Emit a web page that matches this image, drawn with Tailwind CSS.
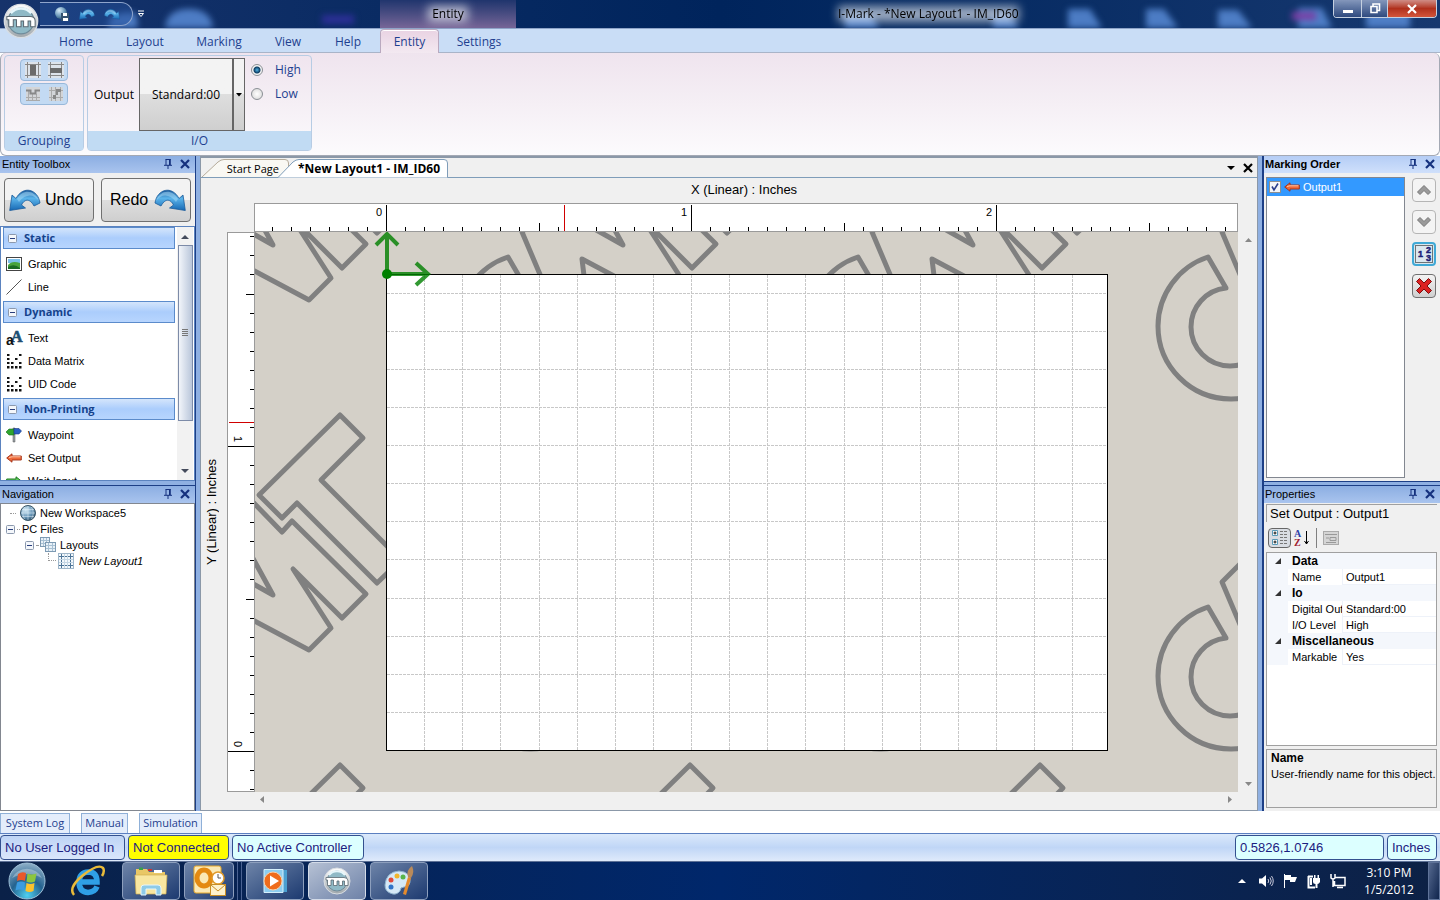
<!DOCTYPE html>
<html lang="en">

<head>
    <meta charset="UTF-8">
    <meta name="viewport" content="width=device-width, initial-scale=1.0">
    <script src="https://cdn.jsdelivr.net/npm/@tailwindcss/browser@4"></script>
    <title>I-Mark - *New Layout1 - IM_ID60</title>
</head>

<body class="h-screen flex flex-col overflow-hidden bg-white text-black text-[11px] leading-4 font-['Liberation_Sans',Arial,sans-serif]">

    <!-- shared icons -->
    <svg class="absolute w-0 h-0" aria-hidden="true">
        <defs>
            <linearGradient id="blueArrow" x1="0" y1="0" x2="0" y2="1">
                <stop offset="0" stop-color="#1c5a9c" />
                <stop offset=".4" stop-color="#5bb4ea" />
                <stop offset="1" stop-color="#1668b4" />
            </linearGradient>
            <linearGradient id="steel" x1="0" y1="0" x2="0" y2="1">
                <stop offset="0" stop-color="#ffffff" />
                <stop offset="1" stop-color="#9fa6ab" />
            </linearGradient>
            <radialGradient id="globe" cx=".35" cy=".3" r=".8">
                <stop offset="0" stop-color="#d6ecf8" />
                <stop offset=".6" stop-color="#6593b5" />
                <stop offset="1" stop-color="#24475f" />
            </radialGradient>
            <radialGradient id="orb" cx=".5" cy=".9" r=".9">
                <stop offset="0" stop-color="#4fd0f0" />
                <stop offset=".5" stop-color="#24628f" />
                <stop offset="1" stop-color="#8fb0c8" />
            </radialGradient>
        </defs>
        <symbol id="undo" viewBox="0 0 32 24">
            <path d="M3 7 L.7 22.500 L16.500 20 L12.500 17 C15 12 20 9 25 18 L31 15 C29 1 14 -3 7 10.500 Z" fill="url(#blueArrow)" stroke="#1b5c9a" stroke-width=".8" />
            <path d="M8 11 C14 0 26 2 30 13 C25 6 17 5 10 14 Z" fill="#a9dcf7" opacity=".5" />
        </symbol>
        <symbol id="pin" viewBox="0 0 10 10">
            <path d="M2.500 .5 H7.500 M3 .5 V6 M6.500 0 V6 M7.300 0 V6 M1 6.300 H9 M5 6 V10" stroke="#15317e" fill="none" />
        </symbol>
        <symbol id="cross" viewBox="0 0 10 10">
            <path d="M1 1 L9 9 M9 1 L1 9" stroke="currentColor" stroke-width="2.200" fill="none" />
        </symbol>
        <symbol id="minus" viewBox="0 0 9 9">
            <rect x=".5" y=".5" width="8" height="8" rx="1" fill="#f4f7fb" stroke="#8b98ad" />
            <path d="M2 4.500 H7" stroke="#2a3f7d" />
        </symbol>
        <symbol id="redarrow" viewBox="0 0 16 10">
            <path d="M.7 5 L6 .8 V3 H15.300 V7 H6 V9.200 Z" fill="#ee6a3b" stroke="#a02c12" stroke-width=".9" />
            <path d="M3 4.500 L6 3.800 H14.500" stroke="#ffc9a8" fill="none" />
        </symbol>
        <symbol id="matrix" viewBox="0 0 16 16">
            <path d="M1 1h2.500v2h-2.500z M1 5h2.500v2h-2.500z M1 9h2.500v2h-2.500z M1 13h2.500v2.500h-2.500z M5 13h2.500v2.500h-2.500z M9 13h2.500v2.500h-2.500z M13 13h2.500v2.500h-2.500z M13 1h2.500v2h-2.500z M9 5h2.500v2h-2.500z M13 9h2.500v2h-2.500z M5 9h2.500v2h-2.500z" fill="#111" />
        </symbol>
        <symbol id="im" viewBox="0 0 28 28">
            <circle cx="14" cy="14" r="13" fill="url(#steel)" stroke="#d8dde2" />
            <circle cx="14" cy="14" r="10" fill="#8fb9c6" stroke="#6f8c9b" />
            <path d="M6 8 A10.500 10.500 0 0 1 22 8" stroke="#e6f6fb" stroke-width="2" fill="none" />
            <path d="M3 10.500 H21 Q25 10.500 25 14 V18.500 H21.500 V14 H19.500 V18.500 H16 V14 H14 V18.500 H10.500 V13 H8 V18.500 H4.500 V13 H3 Z" fill="#fff" stroke="#5b6871" stroke-width=".8" />
        </symbol>
        <symbol id="layout" viewBox="0 0 16 16">
            <rect x=".5" y=".5" width="15" height="15" fill="#f3f8fc" stroke="#9fb6c9" />
            <path d="M3.500 1 V15 M12.500 1 V15 M1 3.500 H15 M1 12.500 H15" stroke="#4d7497" />
            <path d="M6.500 1 V15 M9.500 1 V15 M1 6.500 H15 M1 9.500 H15" stroke="#c4d6e4" />
        </symbol>
    </svg>

    <!-- title bar -->
    <header class="relative h-7 shrink-0 flex items-center overflow-hidden bg-gradient-to-r from-[#16336b] via-[#00245c] to-[#16386f] font-['Open_Sans',sans-serif]">
        <svg class="absolute inset-0 w-full h-full" aria-hidden="true">
            <g class="blur-[3px]" fill="#5d90dc">
                <path d="M165 28 q2 -20 26 -19 q20 1 22 19z M108 28 q0 -18 28 -15 l2 15z" opacity=".8" />
                <path d="M845 14h26l8 14h-34z M993 14h16l10 14h-26z M1068 9h22l12 19h-34z M1146 9h18l14 19h-32z M1218 10h20l14 18h-34z M1298 8h24l10 20h-34z M1366 8h44v20h-44z" opacity=".8" />
                <path d="M1292 12h24v8h-24z" fill="#7a3fa5" />
                <path d="M322 15h32v9h-32z" fill="#2c2f96" />
            </g>
        </svg>
        <div class="relative ml-10 flex items-center gap-[9px] h-6 pl-[14px] pr-3 rounded-r-full border border-[#8fa5cc] border-l-0 bg-[#23509a]/50">
            <button aria-label="Save"><svg class="size-4" viewBox="0 0 16 16"><circle cx="7" cy="7" r="6" fill="url(#globe)" /><rect x="7" y="7" width="8" height="8" fill="#35526f" /><path d="M9 7h4v3H9z M9 12h5v3H9z" fill="#fff" /></svg></button>
            <button aria-label="Undo"><svg class="w-4 h-3"><use href="#undo" /></svg></button>
            <button aria-label="Redo"><svg class="w-4 h-3 -scale-x-100"><use href="#undo" /></svg></button>
        </div>
        <button aria-label="Customize" class="relative ml-1"><svg class="w-2 h-2" viewBox="0 0 8 8"><path d="M1 1H7 M1.500 3.500H6.500L4 6.500Z" stroke="#fff" fill="none" /></svg></button>
        <div class="absolute left-[380px] w-[136px] h-7 flex items-center justify-center text-xs bg-gradient-to-b from-[#2b3a72]/70 to-[#a77fae]/70"><span class="bg-white/60 blur-[5px] absolute w-10 h-4"></span><span class="relative">Entity</span></div>
        <div class="absolute left-[838px] text-xs"><span class="absolute inset-0 bg-white/60 blur-[5px]"></span><span class="relative whitespace-nowrap">I-Mark - *New Layout1 - IM_ID60</span></div>
        <div class="relative ml-auto mr-[3px] self-start flex h-[18px] rounded-b-sm overflow-hidden border border-t-0 border-[#c5d0e0]">
            <button aria-label="Minimize" class="w-7 bg-gradient-to-b from-[#8497bb] to-[#2f4a7f] border-r border-[#c5d0e0]"><svg class="mx-auto w-3 h-4" viewBox="0 0 12 16"><rect x="1" y="9" width="10" height="3" fill="#fff" /></svg></button>
            <button aria-label="Restore" class="w-[26px] bg-gradient-to-b from-[#8497bb] to-[#2f4a7f] border-r border-[#c5d0e0]"><svg class="mx-auto w-3 h-4" viewBox="0 0 12 16"><path d="M4 5V3H10.500V9.500H8.500 M2 5.500H8V11.500H2Z" stroke="#fff" stroke-width="1.600" fill="none" /></svg></button>
            <button aria-label="Close" class="w-12 text-white bg-gradient-to-b from-[#cf8c85] via-[#b0301c] to-[#d3553a]"><svg class="mx-auto size-[10px]"><use href="#cross" /></svg></button>
        </div>
    </header>
    <button aria-label="Application menu" class="absolute left-[3px] top-[3px] z-10 size-9"><svg class="size-9"><use href="#im" /></svg></button>

    <!-- ribbon tabs -->
    <nav class="h-[25px] shrink-0 flex items-end pl-11 bg-[#c9ddf6] text-xs text-[#1e3f8f] border-t border-[#8ea4c8] font-['Open_Sans',sans-serif] shadow-[inset_0_-1px_#a9b4c8]">
        <a href="#" class="w-16 h-6 pt-px flex items-center justify-center">Home</a>
        <a href="#" class="w-[74px] h-6 pt-px flex items-center justify-center">Layout</a>
        <a href="#" class="w-[74px] h-6 pt-px flex items-center justify-center">Marking</a>
        <a href="#" class="w-16 h-6 pt-px flex items-center justify-center">View</a>
        <a href="#" class="w-[60px] h-6 pt-px pr-1 flex items-center justify-center">Help</a>
        <a href="#" class="w-[59px] h-6 flex items-center justify-center rounded-t border border-b-0 border-[#b9a9bf] bg-gradient-to-b from-[#e9d3e3] to-[#f3e9f1] shadow-[inset_0_1px_#fff]">Entity</a>
        <a href="#" class="w-20 h-6 pt-px flex items-center justify-center">Settings</a>
    </nav>

    <!-- ribbon -->
    <section class="h-[103px] shrink-0 flex gap-[3px] pl-[3px] pt-[2px] pb-1 rounded-md border border-t-0 border-[#a4a9b4] bg-gradient-to-b from-[#efe4ee] via-[#f5eff5] to-[#fcfbfd] text-xs text-[#1e3f8f] font-['Open_Sans',sans-serif]">
        <div class="w-20 flex flex-col rounded border border-[#b7cce4]">
            <div class="flex-1 pt-[3px] flex flex-col items-center gap-[2px]">
                <div class="w-12 h-[22px] flex items-center justify-around rounded-sm border border-[#98b8da] bg-[#c3daf3]">
                    <button aria-label="Same width"><svg class="size-4" viewBox="0 0 16 16"><rect width="16" height="16" fill="#dde3ea" /><path d="M2.500 0V16M13.500 0V16M0 2.500H16M0 13.500H16" stroke="#888" /><rect x="5" y="3" width="6" height="10" fill="#6b6b6b" /></svg></button>
                    <button aria-label="Same height"><svg class="size-4" viewBox="0 0 16 16"><rect width="16" height="16" fill="#dde3ea" /><path d="M2.500 0V16M13.500 0V16M0 2.500H16M0 13.500H16" stroke="#888" /><rect x="2" y="6" width="12" height="5" fill="#6b6b6b" /></svg></button>
                </div>
                <div class="w-12 h-[22px] flex items-center justify-around rounded-sm border border-[#98b8da] bg-[#c3daf3]">
                    <button aria-label="Group"><svg class="size-4" viewBox="0 0 16 16"><rect x="1" y="1" width="14" height="14" fill="#d3d5d8" /><path d="M3.500 5V15M7.500 8V15M11.500 8V15M1 11.500H15M1 14.500H15" stroke="#aaa" fill="none" /><path d="M1 4.500H5.500V7.500H10.500V4.500H15" stroke="#888" stroke-width="2" fill="none" /></svg></button>
                    <button aria-label="Ungroup"><svg class="size-4" viewBox="0 0 16 16"><rect x="1" y="1" width="14" height="14" fill="#d3d5d8" /><path d="M3.500 1V15M7.500 1V15M12.500 1V15M1 4.500H15M1 11.500H15" stroke="#aaa" fill="none" /><path d="M8 3h5v3h-3v3h-2z M5 9h3v4h-3z" fill="#888" /></svg></button>
                </div>
            </div>
            <div class="h-[19px] text-center leading-[19px] bg-[#c1dbf3]">Grouping</div>
        </div>
        <div class="w-[225px] flex flex-col rounded border border-[#b7cce4]">
            <div class="flex-1 flex items-center pl-[6px] pt-[2px]">
                <label for="output" class="w-[45px] text-black">Output</label>
                <button id="output" class="w-[94px] h-[73px] border border-[#666] text-black bg-gradient-to-b from-[#f3f3f3] from-50% via-[#dedede] via-50% to-[#cfcfcf]">Standard:00</button>
                <button aria-label="Choose output" class="-ml-px w-[13px] h-[73px] border border-l-2 border-[#666] bg-gradient-to-b from-[#f3f3f3] from-50% via-[#dedede] via-50% to-[#cfcfcf]"><svg class="mx-auto w-[6px] h-[4px]" viewBox="0 0 6 4"><path d="M0 0H6L3 3.500Z" /></svg></button>
                <div class="self-start ml-[6px] flex flex-col">
                    <label class="h-6 flex items-center gap-3"><input type="radio" name="level" checked class="appearance-none size-3 rounded-full border border-[#8a8f95] bg-[radial-gradient(#4fb3e6_0,#0d3c62_3px,#f4f4f4_4px)]">High</label>
                    <label class="h-6 flex items-center gap-3"><input type="radio" name="level" class="appearance-none size-3 rounded-full border border-[#8a8f95] bg-[radial-gradient(#fff,#d5d5d5)]">Low</label>
                </div>
            </div>
            <div class="h-[19px] text-center leading-[19px] bg-[#c1dbf3]">I/O</div>
        </div>
    </section>

    <!-- workspace -->
    <main class="flex-1 min-h-0 flex bg-[#8fb0e2]">

        <aside class="w-[196px] shrink-0 flex flex-col border-r border-[#1d3f86]">
            <div class="h-[17px] flex items-center pl-[2px] pr-[5px] pb-[2px] gap-[7px] bg-gradient-to-b from-[#8caee2] to-[#a9c4ee]">
                <h2 class="flex-1">Entity Toolbox</h2>
                <button aria-label="Auto hide"><svg class="size-[10px]"><use href="#pin" /></svg></button>
                <button aria-label="Close" class="text-[#15317e]"><svg class="size-[10px]"><use href="#cross" /></svg></button>
            </div>
            <div class="h-[53px] flex justify-between px-1 pt-[5px] bg-[#f0f0f0] text-base">
                <button class="w-[90px] h-11 flex items-center gap-1 pl-1 rounded-sm border border-[#707070] bg-gradient-to-b from-[#f3f3f3] from-50% via-[#dedede] via-50% to-[#cfcfcf]"><svg class="w-8 h-6"><use href="#undo" /></svg>Undo</button>
                <button class="w-[90px] h-11 flex items-center gap-[6px] pl-2 rounded-sm border border-[#707070] bg-gradient-to-b from-[#f3f3f3] from-50% via-[#dedede] via-50% to-[#cfcfcf]">Redo<svg class="w-8 h-6 -scale-x-100"><use href="#undo" /></svg></button>
            </div>
            <div class="h-[255px] flex border border-[#5b83bf] bg-white overflow-hidden">
                <div class="flex-1 px-[2px]">
                    <h3 class="h-[22px] mb-[3px] flex items-center gap-[7px] pl-1 border border-[#5b8bcb] bg-gradient-to-b from-[#d4e5fb] via-[#abcdfc] to-[#b7d5fe] font-bold text-[#15428b] font-['Open_Sans',sans-serif]"><svg class="size-[9px]"><use href="#minus" /></svg>Static</h3>
                    <ul>
                        <li class="h-[23px] flex items-center gap-[6px] pl-[3px]"><svg class="size-4" viewBox="0 0 16 16"><rect x=".5" y="1.500" width="15" height="13" fill="#fff" stroke="#444" /><rect x="2" y="3" width="12" height="4" fill="#7cc0ea" /><path d="M2 9Q6 4 14 7V13H2Z" fill="#48a33c" /><path d="M2 11Q8 7 14 12V13H2Z" fill="#1b6a25" /></svg>Graphic</li>
                        <li class="h-[23px] flex items-center gap-[6px] pl-[3px]"><svg class="size-4" viewBox="0 0 16 16"><path d="M.5 15.500L15.500 .5" stroke="#555" /></svg>Line</li>
                    </ul>
                    <h3 class="h-[22px] my-[3px] flex items-center gap-[7px] pl-1 border border-[#5b8bcb] bg-gradient-to-b from-[#d4e5fb] via-[#abcdfc] to-[#b7d5fe] font-bold text-[#15428b] font-['Open_Sans',sans-serif]"><svg class="size-[9px]"><use href="#minus" /></svg>Dynamic</h3>
                    <ul>
                        <li class="h-[23px] flex items-center gap-[6px] pl-[3px]"><svg class="size-4 overflow-visible" viewBox="0 0 16 16"><g font-weight="bold"><text x="5" y="12" font-family="Liberation Serif" font-size="16" fill="#1f4f72" stroke="#1f4f72" stroke-width=".6">A</text><text x="0" y="15" font-family="Liberation Sans" font-size="14" fill="#111">a</text></g></svg>Text</li>
                        <li class="h-[23px] flex items-center gap-[6px] pl-[3px]"><svg class="size-4"><use href="#matrix" /></svg>Data Matrix</li>
                        <li class="h-[23px] flex items-center gap-[6px] pl-[3px]"><svg class="size-4"><use href="#matrix" /></svg>UID Code</li>
                    </ul>
                    <h3 class="h-[22px] my-[3px] flex items-center gap-[7px] pl-1 border border-[#5b8bcb] bg-gradient-to-b from-[#d4e5fb] via-[#abcdfc] to-[#b7d5fe] font-bold text-[#15428b] font-['Open_Sans',sans-serif]"><svg class="size-[9px]"><use href="#minus" /></svg>Non-Printing</h3>
                    <ul>
                        <li class="h-[23px] flex items-center gap-[6px] pl-[3px]"><svg class="size-4" viewBox="0 0 16 16"><path d="M7 1H9V15H7Z" fill="#9aa3a8" stroke="#555" stroke-width=".5" /><path d="M0 5L3 2H8V8H3Z" fill="#2fa52f" stroke="#176b17" stroke-width=".6" /><path d="M15.500 4L13 1.500H8V7H13Z" fill="#2a5fc4" stroke="#173a80" stroke-width=".6" /></svg>Waypoint</li>
                        <li class="h-[23px] flex items-center gap-[6px] pl-[3px]"><svg class="w-4 h-[10px]"><use href="#redarrow" /></svg>Set Output</li>
                        <li class="h-[23px] flex items-center gap-[6px] pl-[3px]"><svg class="w-4 h-[10px]" viewBox="0 0 16 10"><path d="M15.300 5L10 .8V3H.7V7H10V9.200Z" fill="#5fc95a" stroke="#1e7a22" /></svg>Wait Input</li>
                    </ul>
                </div>
                <div class="w-4 mr-px flex flex-col items-center bg-[#f2f2f2]">
                    <svg class="h-[18px] w-2" viewBox="0 0 8 18"><path d="M0 12L4 8L8 12Z" fill="#444b5c" /></svg>
                    <div class="w-[15px] h-[176px] flex items-center justify-center border border-[#7d8ba8] bg-gradient-to-r from-[#f2f5fa] to-[#b9c6da]"><svg class="size-2" viewBox="0 0 8 8"><path d="M1 .5H7M1 2.500H7M1 4.500H7M1 6.500H7" stroke="#777" /></svg></div>
                    <svg class="mt-auto h-[18px] w-2" viewBox="0 0 8 18"><path d="M0 7L4 11L8 7Z" fill="#444b5c" /></svg>
                </div>
            </div>
            <div class="h-[5px] border-b border-[#1d3f86]"></div>
            <div class="h-[17px] flex items-center pl-[2px] pr-[5px] pb-[2px] gap-[7px] bg-gradient-to-b from-[#8caee2] to-[#a9c4ee]">
                <h2 class="flex-1">Navigation</h2>
                <button aria-label="Auto hide"><svg class="size-[10px]"><use href="#pin" /></svg></button>
                <button aria-label="Close" class="text-[#15317e]"><svg class="size-[10px]"><use href="#cross" /></svg></button>
            </div>
            <div class="flex-1 pt-px bg-white border border-[#828790]">
                <ul>
                    <li class="h-4 flex items-center gap-1 pl-[9px]"><span class="w-[6px] border-t border-dotted border-[#999]"></span><svg class="size-4" viewBox="0 0 16 16"><circle cx="8" cy="8" r="7.500" fill="url(#globe)" stroke="#3a5668" /><path d="M8 1V15M1 8H15M4.500 2Q1 8 4.500 14M11.500 2Q15 8 11.500 14M2 4.500H14M2 11.500H14" stroke="#e3f1fa" stroke-width=".5" fill="none" /></svg>New Workspace5</li>
                    <li class="h-4 flex items-center gap-[2px] pl-[5px]"><svg class="size-[9px]"><use href="#minus" /></svg><span class="w-[3px] border-t border-dotted border-[#999]"></span>PC Files</li>
                    <li class="h-4 flex items-center gap-[2px] pl-6"><svg class="size-[9px]"><use href="#minus" /></svg><span class="w-[2px] border-t border-dotted border-[#999]"></span><svg class="size-4 mr-[2px]" viewBox="0 0 16 16"><rect x=".5" y=".5" width="9" height="9" fill="#e8f1f8" stroke="#7d9ab3" /><path d="M3.500 1V9M6.500 1V9M1 3.500H9M1 6.500H9" stroke="#a9c1d4" /><rect x="5.500" y="5.500" width="10" height="9" fill="#e8f1f8" stroke="#7d9ab3" /><path d="M8.500 6V14M12.500 6V14M6 8.500H15M6 11.500H15" stroke="#a9c1d4" /></svg>Layouts</li>
                    <li class="h-4 flex items-center gap-[2px] pl-[47px]"><span class="w-2 h-2 -mt-2 border-l border-b border-dotted border-[#999]"></span><svg class="size-4 mr-[3px]"><use href="#layout" /></svg><i>New Layout1</i></li>
                </ul>
            </div>
        </aside>

        <section class="flex-1 min-w-0 ml-1 mr-[1px] flex flex-col bg-[#f0f0f0] border border-t-2 border-[#8b98a8]">
            <div class="h-5 flex items-end border-b border-[#7f9db9] font-['Open_Sans',sans-serif]">
                <div class="relative h-[18px] w-[88px]">
                    <svg class="absolute inset-0 w-full h-full" viewBox="0 0 88 18" preserveAspectRatio="none"><path d="M1 18L17 3Q20 .5 23 .5H84Q87.500 .5 87.500 4V18" fill="#f9f8f3" stroke="#b5ab9a" /></svg>
                    <a href="#" class="absolute right-[10px] top-[2px] whitespace-nowrap">Start Page</a>
                </div>
                <div class="relative -ml-[11px] -mb-px h-[19px] w-[170px]">
                    <svg class="absolute inset-0 w-full h-full" viewBox="0 0 170 19" preserveAspectRatio="none"><path d="M0 18.500L15 3Q18 .5 21 .5H166Q169.500 .5 169.500 4V18.500" fill="#fff" stroke="#7f9db9" /></svg>
                    <a href="#" class="absolute right-2 top-[2px] whitespace-nowrap font-bold text-xs">*New Layout1 - IM_ID60</a>
                </div>
                <div class="ml-auto mr-1 mb-1 flex items-center gap-2">
                    <button aria-label="Windows"><svg class="w-2 h-1" viewBox="0 0 8 4"><path d="M0 0H8L4 4Z" /></svg></button>
                    <button aria-label="Close document"><svg class="size-[10px]"><use href="#cross" /></svg></button>
                </div>
            </div>
            <div class="h-[25px] pl-[30px] text-center text-[13px] leading-[23px]">X (Linear) : Inches</div>
            <div class="flex-1 min-h-0 grid grid-cols-[26px_27px_1fr_19px] grid-rows-[29px_1fr_18px]">
                <div class="col-span-2"></div>
                <svg id="rulerX" class="w-full h-full bg-white border border-[#9a9a9a] text-[11px]"></svg>
                <div></div>

                <div class="flex justify-center items-center pr-1"><span class="[writing-mode:vertical-rl] rotate-180 whitespace-nowrap text-[13px]">Y (Linear) : Inches</span></div>
                <svg id="rulerY" class="w-full h-full bg-white border border-r-0 border-[#9a9a9a] text-[11px]"></svg>
                <svg id="canvas" class="w-full h-full bg-[#d4d0c8] border-l border-[#9a9a9a]">
                    <defs>
                        <pattern id="logo" width="350" height="350" patternUnits="userSpaceOnUse" patternTransform="translate(-175 178)">
                            <g transform="translate(-80 -410)" fill="none" stroke="#808080" stroke-width="5" stroke-linejoin="round">
                                <path d="M340 415L363 438L321 480L401 560L377 583L297 503L282 518L259 495Z" />
                                <path d="M248 497L282 532L292 521L366 594L342 618L293 569L331 628L309 650L232 609L240 676L222 700L172 582L200 554L273 595L232 520Z" />
                                <path d="M158 607A73 73 0 0 0 108 676A73 73 0 0 0 181 749A73 73 0 0 0 251 697L217 690A39 39 0 0 1 180 716A39 39 0 0 1 141 677A39 39 0 0 1 176 638Z" />
                            </g>
                        </pattern>
                    </defs>
                    <rect width="100%" height="100%" fill="url(#logo)" />
                    <rect x="131.500" y="42.500" width="721" height="476" fill="#fff" stroke="#000" />
                    <g id="grid" stroke="#c8c8c8" stroke-dasharray="3 1"></g>
                    <g stroke="#008000" stroke-width="4" fill="none" opacity=".8">
                        <path d="M132 42V3M121 13L132 2L143 13" />
                        <path d="M132 42H172M161 31L173 42L161 53" />
                    </g>
                    <circle cx="132" cy="42" r="5" fill="#008000" />
                </svg>
                <div class="ml-[2px] flex flex-col items-center justify-between py-[6px]">
                    <svg class="w-[7px] h-1" viewBox="0 0 7 4"><path d="M0 4L3.500 0L7 4Z" fill="#888" /></svg>
                    <svg class="w-[7px] h-1" viewBox="0 0 7 4"><path d="M0 0L3.500 4L7 0Z" fill="#888" /></svg>
                </div>

                <div class="col-span-2"></div>
                <div class="flex items-center justify-between px-[6px] pb-1">
                    <svg class="w-1 h-[7px]" viewBox="0 0 4 7"><path d="M4 0L0 3.500L4 7Z" fill="#888" /></svg>
                    <svg class="w-1 h-[7px]" viewBox="0 0 4 7"><path d="M0 0L4 3.500L0 7Z" fill="#888" /></svg>
                </div>
                <div></div>
            </div>
        </section>

        <aside class="w-[178px] shrink-0 ml-[3px] flex flex-col border-l-2 border-[#1d3f86]">
            <div class="h-[17px] flex items-center pl-[1px] pr-[5px] pb-[2px] gap-[7px] bg-gradient-to-b from-[#b5cdf5] to-[#cfe0fb]">
                <h2 class="flex-1 font-bold">Marking Order</h2>
                <button aria-label="Auto hide"><svg class="size-[10px]"><use href="#pin" /></svg></button>
                <button aria-label="Close" class="text-[#15317e]"><svg class="size-[10px]"><use href="#cross" /></svg></button>
            </div>
            <div class="h-[308px] flex gap-[7px] pl-[2px] pr-1 pt-1 pb-[3px] bg-[#f0f0f0]">
                <div class="flex-1 bg-white border border-[#828790]">
                    <label class="h-[18px] flex items-center gap-[3px] pl-[2px] bg-[#3399ff] text-white">
                        <input type="checkbox" checked class="peer sr-only">
                        <svg class="size-3" viewBox="0 0 12 12"><rect x=".5" y=".5" width="11" height="11" fill="#f3f5f8" stroke="#8e8f8f" /><path d="M3 5.500L5 9L9 2.500" stroke="#2b3f8c" stroke-width="1.600" fill="none" /></svg>
                        <svg class="w-4 h-[10px]"><use href="#redarrow" /></svg>Output1
                    </label>
                </div>
                <div class="w-6 flex flex-col gap-2 pt-px">
                    <button aria-label="Move up" class="size-6 flex items-center justify-center rounded-sm border border-[#b5b5b5] bg-[#f4f4f4]"><svg class="w-4 h-3" viewBox="0 0 16 12"><path d="M1.500 8L8 1.500L14.500 8L12 10.500L8 6.500L4 10.500Z" fill="#9a9a9a" stroke="#777" /></svg></button>
                    <button aria-label="Move down" class="size-6 flex items-center justify-center rounded-sm border border-[#b5b5b5] bg-[#f4f4f4]"><svg class="w-4 h-3" viewBox="0 0 16 12"><path d="M1.500 4L8 10.500L14.500 4L12 1.500L8 5.500L4 1.500Z" fill="#9a9a9a" stroke="#777" /></svg></button>
                    <button aria-label="Renumber" class="size-6 flex items-center justify-center rounded-sm border-2 border-[#3fa9d6] bg-[#dbe7ee]"><svg class="size-5" viewBox="0 0 20 20"><rect x="1.500" y="1.500" width="17" height="17" fill="none" stroke="#000" stroke-dasharray="1 1" /><g font-family="Liberation Sans" font-weight="bold" font-size="9" fill="#1b1f78" stroke="#1b1f78" stroke-width=".5"><text x="4" y="13">1</text><text x="12" y="9">2</text><text x="12" y="17">3</text></g></svg></button>
                    <button aria-label="Delete" class="size-6 flex items-center justify-center rounded-sm border border-[#707070] bg-gradient-to-b from-[#f3f3f3] to-[#d0d0d0]"><svg class="size-[18px]" viewBox="0 0 18 18"><path d="M4.500 1.500L9 6L13.500 1.500L16.500 4.500L12 9L16.500 13.500L13.500 16.500L9 12L4.500 16.500L1.500 13.500L6 9L1.500 4.500Z" fill="#dc2222" stroke="#7e0d0d" /></svg></button>
                </div>
            </div>
            <div class="h-[5px] border-y border-[#1d3f86]"></div>
            <div class="h-[17px] flex items-center pl-[1px] pr-[5px] pb-[2px] gap-[7px] bg-gradient-to-b from-[#8caee2] to-[#a9c4ee]">
                <h2 class="flex-1">Properties</h2>
                <button aria-label="Auto hide"><svg class="size-[10px]"><use href="#pin" /></svg></button>
                <button aria-label="Close" class="text-[#15317e]"><svg class="size-[10px]"><use href="#cross" /></svg></button>
            </div>
            <div class="flex-1 flex flex-col pl-[2px] pr-[3px] pb-[3px] bg-[#f0f0f0]">
                <div class="mt-px h-[18px] pl-[3px] border-l border-t border-[#a0a0a0] text-[13px] leading-[17px]">Set Output : Output1</div>
                <div class="h-[30px] flex items-center pl-[2px] pt-px">
                    <button aria-label="Categorized" class="w-[23px] h-5 flex items-center justify-center rounded-sm border border-[#666] bg-[#d9dde3]"><svg class="size-4" viewBox="0 0 16 16"><path d="M.5 .5h5v5h-5z M.5 9.500h5v5h-5z" fill="#fff" stroke="#5b9bb8" /><path d="M1.500 3H4.500M3 1.500V4.500M1.500 12H4.500M3 10.500V13.500" stroke="#111" /><path d="M8 1.500H15M8 4.500H15M8 7.500H15M8 10.500H15M8 13.500H15" stroke="#777" stroke-dasharray="3 1" /></svg></button>
                    <button aria-label="Alphabetical" class="ml-[3px]"><svg class="w-4 h-4 overflow-visible" viewBox="0 0 16 16"><g font-family="Liberation Serif" font-weight="bold" font-size="10"><text x="0" y="7" fill="#2f3fa8">A</text><text x="0" y="16" fill="#a02030">Z</text></g><path d="M12.500 1V14M10.500 11L12.500 14L14.500 11" stroke="#000" fill="none" /></svg></button>
                    <span class="ml-[6px] mr-[6px] h-5 border-l border-[#808080]"></span>
                    <button aria-label="Property pages" disabled><svg class="size-4" viewBox="0 0 16 16"><rect x=".5" y="1.500" width="15" height="13" fill="#d5d5d5" stroke="#aaa" /><path d="M2 4.500H14M3 8h3M7 7.500h6v3h-6zM3 12.500H13" stroke="#999" fill="none" /></svg></button>
                </div>
                <div class="flex-1 bg-white border border-[#a0a0a0] overflow-hidden">
                    <table class="w-full table-fixed border-separate border-spacing-0 text-left">
                        <colgroup>
                            <col class="w-[21px]">
                            <col class="w-[55px]">
                            <col>
                        </colgroup>
                        <tbody class="[&_td]:h-4 [&_td]:p-0 [&_td]:whitespace-nowrap [&_td]:overflow-hidden">
                            <tr class="bg-[#f4f7fc]"><td><svg class="mx-auto size-[6px]" viewBox="0 0 6 6"><path d="M0 6H6V0Z" fill="#333" /></svg></td><td colspan="2"><b class="block pl-1 text-xs leading-4">Data</b></td></tr>
                            <tr><td class="bg-[#f4f7fc]"></td><td class="border-r border-[#eef2f9]"><span class="block pl-1 overflow-hidden">Name</span></td><td class="shadow-[inset_0_-1px_#eef2f9]"><span class="pl-[3px]">Output1</span></td></tr>
                            <tr class="bg-[#f4f7fc]"><td><svg class="mx-auto size-[6px]" viewBox="0 0 6 6"><path d="M0 6H6V0Z" fill="#333" /></svg></td><td colspan="2"><b class="block pl-1 text-xs leading-4">Io</b></td></tr>
                            <tr><td class="bg-[#f4f7fc]"></td><td class="border-r border-[#eef2f9]"><span class="block pl-1 overflow-hidden">Digital Output</span></td><td class="shadow-[inset_0_-1px_#eef2f9]"><span class="pl-[3px]">Standard:00</span></td></tr>
                            <tr><td class="bg-[#f4f7fc]"></td><td class="border-r border-[#eef2f9]"><span class="block pl-1 overflow-hidden">I/O Level</span></td><td class="shadow-[inset_0_-1px_#eef2f9]"><span class="pl-[3px]">High</span></td></tr>
                            <tr class="bg-[#f4f7fc]"><td><svg class="mx-auto size-[6px]" viewBox="0 0 6 6"><path d="M0 6H6V0Z" fill="#333" /></svg></td><td colspan="2"><b class="block pl-1 text-xs leading-4">Miscellaneous</b></td></tr>
                            <tr><td class="bg-[#f4f7fc]"></td><td class="border-r border-[#eef2f9]"><span class="block pl-1 overflow-hidden">Markable</span></td><td class="shadow-[inset_0_-1px_#eef2f9]"><span class="pl-[3px]">Yes</span></td></tr>
                        </tbody>
                    </table>
                </div>
                <div class="mt-[3px] h-[59px] pl-1 border border-[#a0a0a0] whitespace-nowrap overflow-hidden">
                    <b class="block text-xs leading-[17px]">Name</b>
                    <p class="leading-[14px]">User-friendly name for this object.</p>
                </div>
            </div>
        </aside>
    </main>

    <!-- hidden panel tabs -->
    <div class="h-[22px] shrink-0 flex gap-[11px] pt-[2px] bg-white text-[11px] text-[#1e3f8f] font-['Open_Sans',sans-serif]">
        <button class="w-[70px] pb-[2px] border border-b-0 border-[#8fb0d8] bg-[#e4edfb]">System Log</button>
        <button class="w-[47px] pb-[2px] border border-b-0 border-[#8fb0d8] bg-[#e4edfb]">Manual</button>
        <button class="w-[63px] pb-[2px] border border-b-0 border-[#8fb0d8] bg-[#e4edfb]">Simulation</button>
    </div>

    <!-- status bar -->
    <footer class="h-7 shrink-0 flex gap-[3px] pt-[1px] pb-[1px] pr-[3px] border-t border-[#5b7fc0] bg-gradient-to-b from-[#dbe9fb] via-[#c0d6f6] to-[#dfeafb] text-[13px] leading-6 text-[#1b2080]">
        <span class="w-[125px] h-[25px] pl-1 rounded-sm border border-[#33508f] bg-gradient-to-b from-[#bed4f5] to-[#d9e6fb]">No User Logged In</span>
        <span class="w-[101px] h-[25px] pl-1 rounded-sm border border-[#33508f] bg-[#ffff00]">Not Connected</span>
        <span class="w-[132px] h-[25px] pl-1 rounded-sm border border-[#33508f] bg-[#dcffff]">No Active Controller</span>
        <span class="ml-auto w-[149px] h-[25px] pl-1 rounded-sm border border-[#33508f] bg-[#dcffff]">0.5826,1.0746</span>
        <span class="w-[50px] h-[25px] pl-1 rounded-sm border border-[#33508f] bg-[#dcffff]">Inches</span>
    </footer>

    <!-- taskbar -->
    <div class="h-[39px] shrink-0 flex items-center border-t border-[#5d7196] bg-gradient-to-r from-[#0a2148] via-[#00276b] to-[#0d2145]">
        <button aria-label="Start" class="ml-2 size-[38px]"><svg class="size-[38px]" viewBox="0 0 38 38"><circle cx="19" cy="19" r="18" fill="url(#orb)" stroke="#9fc0d8" /><path d="M4 16A16 14 0 0 1 34 16Q19 8 4 16Z" fill="#fff" opacity=".3" /><path d="M10 12q4-3 8-1l-1 8q-4-2-8 0z" fill="#e8582b" /><path d="M19.500 11.500q4 2 9 0l-1.500 8q-4 2-8.500 0z" fill="#8cc63f" /><path d="M9 20.500q4-2 8 0l-1 8q-4-2-8.500 0z" fill="#3b9be0" /><path d="M18.500 21q4 2 8 0l-1 8q-4 2-8 0z" fill="#fbc22d" /></svg></button>
        <button aria-label="Internet Explorer" class="ml-6"><svg class="w-9 h-[34px]" viewBox="0 0 36 34"><path d="M9 18H27Q27 8 18.500 8Q9 8.500 9 18.500Q9.500 28 18 28.500Q25 28 27 22.500" stroke="#2f9fe6" stroke-width="5.500" fill="none" /><path d="M4 31Q-2 24 12 12Q28 -1 33 4Q35 7 32 12" stroke="#e9bb3a" stroke-width="2.500" fill="none" /></svg></button>
        <button aria-label="Explorer" class="ml-4 w-[58px] h-[38px] flex items-center justify-center rounded-sm border border-[#8d9fbd] bg-gradient-to-br from-[#6e84a8] to-[#1d3a70]"><svg class="w-[34px] h-[30px]" viewBox="0 0 34 30"><path d="M2 3H13L15 6H31V27H2Z" fill="#e9c766" /><path d="M5 1.500H9V4H5Z" fill="#3aa04a" /><path d="M14 3H18V5H14Z" fill="#c33" /><path d="M20 4H28V7H20Z" fill="#fff" /><path d="M1 9H33L32 28H2Z" fill="#f8e6a0" stroke="#d3b050" stroke-width=".7" /><path d="M7 29V22Q7 19 10 19H24Q27 19 27 22V29H22V23H12V29Z" fill="#8ecbe8" stroke="#e6f6fd" /></svg></button>
        <div class="ml-1 flex h-[38px]">
            <button aria-label="Outlook" class="w-[50px] flex items-center justify-center rounded-sm border border-[#8d9fbd] bg-gradient-to-br from-[#6e84a8] to-[#1d3a70]"><svg class="w-[34px] h-[32px]" viewBox="0 0 34 32"><rect x="2" y="1" width="27" height="27" rx="2" fill="#fbe9b5" stroke="#e7a829" /><ellipse cx="12" cy="13" rx="7" ry="8" fill="none" stroke="#e48a12" stroke-width="5" /><circle cx="26" cy="13" r="6" fill="#fff" stroke="#df9a2a" stroke-width="1.500" /><path d="M26 9V13H29" stroke="#555" fill="none" /><rect x="18.500" y="19.500" width="15" height="11" fill="#fdf1cc" stroke="#c78d25" /><path d="M19 20L26 26L33 20" stroke="#c78d25" fill="none" /></svg></button>
            <span class="w-1 border-r border-[#4a6292]"></span><span class="w-1 border-r border-[#4a6292]"></span>
        </div>
        <button aria-label="Media Player" class="ml-1 w-[58px] h-[38px] flex items-center justify-center rounded-sm border border-[#8d9fbd] bg-gradient-to-br from-[#6e84a8] to-[#1d3a70]"><svg class="w-7 h-[26px]" viewBox="0 0 28 26"><path d="M6 2H26V24H6Z" fill="#4a9fd0" /><path d="M3 1.500H22V24.500H3Z" fill="#8ccdf0" stroke="#d5effb" /><circle cx="12" cy="13" r="9" fill="#ef6c1c" stroke="#fbd0a8" /><path d="M9 7.500L18 13L9 18.500Z" fill="#fff" /></svg></button>
        <button aria-label="I-Mark" class="ml-1 w-[58px] h-[38px] flex items-center justify-center rounded-sm border border-[#d3dbe8] bg-gradient-to-br from-[#b6c1d4] to-[#6e82a8]"><svg class="size-7"><use href="#im" /></svg></button>
        <button aria-label="Paint" class="ml-1 w-[58px] h-[38px] flex items-center justify-center rounded-sm border border-[#8d9fbd] bg-gradient-to-br from-[#6e84a8] to-[#1d3a70]"><svg class="size-8" viewBox="0 0 32 32"><path d="M2 20Q3 7 16 6Q28 7 27 17Q26 22 21 22Q17 22 17 26Q13 31 7 28Q2 26 2 20Z" fill="#d5e9f7" stroke="#8fb3cf" /><circle cx="8" cy="15" r="2.500" fill="#e04a3a" /><circle cx="14" cy="11" r="2.500" fill="#f0b52c" /><circle cx="20" cy="12" r="2.500" fill="#57b54a" /><circle cx="8" cy="22" r="2.500" fill="#2f74c8" /><path d="M20 29L25 12L28 13L23 30Z" fill="#e58a2c" /><path d="M25 12Q23 5 29 1Q32 7 28 13Z" fill="#b98a5a" /></svg></button>
        <div class="ml-auto flex items-center gap-2 text-white text-xs font-['Open_Sans',sans-serif]">
            <button aria-label="Show hidden icons"><svg class="w-2 h-1 mr-1" viewBox="0 0 8 4"><path d="M0 4L4 0L8 4Z" fill="#fff" /></svg></button>
            <svg class="size-4" viewBox="0 0 16 16"><path d="M1 5.500H4L8 2V14L4 10.500H1Z" fill="#fff" /><path d="M10 6Q11.500 8 10 10M12 4.500Q14.500 8 12 11.500M13.500 3Q17 8 13.500 13" stroke="#ccd" fill="none" /></svg>
            <svg class="size-4" viewBox="0 0 16 16"><path d="M2.500 1V15" stroke="#fff" /><path d="M3 2H9V4H15L13 9H8V7H3Z" fill="#fff" /></svg>
            <svg class="size-4" viewBox="0 0 16 16"><path d="M2 3.500H7M2.500 3V14.500H9" stroke="#fff" stroke-width="2" fill="none" /><path d="M7 5H14V9Q13 11 11.500 11V15H9.500V11Q7 11 7 9Z M8 2H9.500V5H8Z M11.500 2H13V5H11.500Z M4 5H6V12H4Z" fill="#fff" /></svg>
            <svg class="size-4" viewBox="0 0 16 16"><path d="M5 4.500H15V12.500H4.500V8M7 14.500H13M1 1V5Q3 7 5 5V1M3 6V14" stroke="#fff" stroke-width="1.500" fill="none" /></svg>
            <div class="w-[70px] -mr-1 text-center leading-[17px]">3:10 PM<br>1/5/2012</div>
            <button aria-label="Show desktop" class="w-3 h-[38px] border border-[#5f7399] bg-gradient-to-br from-[#56698f] to-[#10254d]"></button>
        </div>
    </div>

    <script>
        const NS = 'http://www.w3.org/2000/svg';
        const INCH = 305;

        function add(parent, name, attrs, text) {
            const el = document.createElementNS(NS, name);
            for (const key in attrs) el.setAttribute(key, attrs[key]);
            if (text !== undefined) el.textContent = text;
            parent.appendChild(el);
        }

        // tick lengths: whole inch, half inch, sixteenth
        function tickSize(i) {
            if (i % 16 === 0) return 26;
            return i % 8 === 0 ? 8 : 4;
        }

        const rulerX = document.getElementById('rulerX');
        for (let i = -6; i < 120; i++) {
            const x = Math.round(131 + i * INCH / 16) + 0.5;
            add(rulerX, 'path', { d: `M${x} 27V${27 - tickSize(i)}`, stroke: '#000' });
        }
        for (let n = 0; n < 3; n++) {
            add(rulerX, 'text', { x: 127 + n * INCH, y: 12, 'text-anchor': 'end' }, n);
        }
        add(rulerX, 'path', { d: 'M309.5 1V27', stroke: '#d00000' });

        const rulerY = document.getElementById('rulerY');
        for (let i = -2; i < 28; i++) {
            const y = Math.round(518 - i * INCH / 16) + 0.5;
            add(rulerY, 'path', { d: `M26 ${y}H${26 - tickSize(i)}`, stroke: '#000' });
        }
        for (let n = 0; n < 2; n++) {
            add(rulerY, 'text', { transform: `translate(6 ${508 - n * INCH}) rotate(90)` }, n);
        }
        add(rulerY, 'path', { d: 'M1 189.5H26', stroke: '#d00000' });

        const grid = document.getElementById('grid');
        for (let i = 1; i < 19; i++) {
            const x = Math.round(131 + i * INCH / 8) + 0.5;
            add(grid, 'path', { d: `M${x} 43V518` });
        }
        for (let i = 1; i < 13; i++) {
            const y = Math.round(518 - i * INCH / 8) + 0.5;
            add(grid, 'path', { d: `M132 ${y}H852` });
        }
    </script>

</body>

</html>
